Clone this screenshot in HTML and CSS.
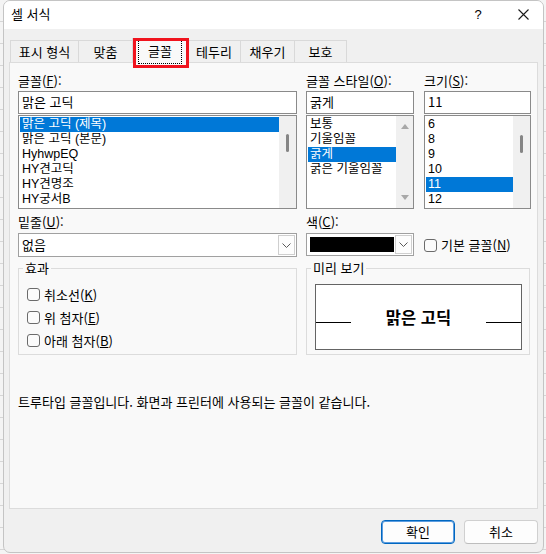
FILE: index.html
```html
<!DOCTYPE html>
<html lang="ko">
<head>
<meta charset="utf-8">
<title>셀 서식</title>
<link rel="stylesheet" href="styles.css">
</head>
<body>
<div class="window">
  <div class="titlebar">
    <span class="title">셀 서식</span>
    <span class="help">?</span>
    <span class="close"><svg width="11" height="11" viewBox="0 0 11 11"><path d="M0.5 0.5 L10.5 10.5 M10.5 0.5 L0.5 10.5" stroke="#1b1b1b" stroke-width="1.1" fill="none"/></svg></span>
  </div>

  <div class="tabs">
    <div class="tab w1">표시 형식</div>
    <div class="tab w2">맞춤</div>
    <div class="tab sel"><span class="focus"></span>글꼴<span class="redbox"></span></div>
    <div class="tab w4">테두리</div>
    <div class="tab w5">채우기</div>
    <div class="tab w6">보호</div>
  </div>

  <div class="panel">
    <div class="row r1">
      <div class="col c1">
        <div class="lbl">글꼴(<u>F</u>):</div>
        <div class="input">맑은 고딕</div>
        <div class="list">
          <div class="items">
            <div class="item on">맑은 고딕 (제목)</div>
            <div class="item">맑은 고딕 (본문)</div>
            <div class="item">HyhwpEQ</div>
            <div class="item">HY견고딕</div>
            <div class="item">HY견명조</div>
            <div class="item">HY궁서B</div>
          </div>
          <div class="sbar"><span class="thumb t-font"></span></div>
        </div>
      </div>
      <div class="col c2">
        <div class="lbl">글꼴 스타일(<u>O</u>):</div>
        <div class="input">굵게</div>
        <div class="list">
          <div class="items">
            <div class="item">보통</div>
            <div class="item">기울임꼴</div>
            <div class="item on">굵게</div>
            <div class="item">굵은 기울임꼴</div>
          </div>
          <div class="sbar arrows"><span class="arr up"></span><span class="arr down"></span></div>
        </div>
      </div>
      <div class="col c3">
        <div class="lbl">크기(<u>S</u>):</div>
        <div class="input">11</div>
        <div class="list">
          <div class="items">
            <div class="item">6</div>
            <div class="item">8</div>
            <div class="item">9</div>
            <div class="item">10</div>
            <div class="item on">11</div>
            <div class="item">12</div>
          </div>
          <div class="sbar"><span class="thumb t-size"></span></div>
        </div>
      </div>
    </div>

    <div class="row r2">
      <div class="col c1">
        <div class="lbl l2">밑줄(<u>U</u>):</div>
        <div class="combo">
          <span class="cval">없음</span>
          <span class="dd"><svg width="9" height="5" viewBox="0 0 9 5"><path d="M0.5 0.5 L4.5 4.5 L8.5 0.5" stroke="#5a5a5a" fill="none"/></svg></span>
        </div>
      </div>
      <div class="col c2">
        <div class="lbl l2">색(<u>C</u>):</div>
        <div class="combo">
          <span class="swatch"></span>
          <span class="dd"><svg width="9" height="5" viewBox="0 0 9 5"><path d="M0.5 0.5 L4.5 4.5 L8.5 0.5" stroke="#5a5a5a" fill="none"/></svg></span>
        </div>
      </div>
      <div class="col c3 chkcol">
        <label class="chk"><span class="box"></span><span>기본 글꼴(<u>N</u>)</span></label>
      </div>
    </div>

    <div class="row r3">
      <div class="group g1">
        <div class="gtitle">효과</div>
        <div class="checks">
          <label class="chk"><span class="box"></span><span>취소선(<u>K</u>)</span></label>
          <label class="chk"><span class="box"></span><span>위 첨자(<u>E</u>)</span></label>
          <label class="chk"><span class="box"></span><span>아래 첨자(<u>B</u>)</span></label>
        </div>
      </div>
      <div class="group g2">
        <div class="gtitle">미리 보기</div>
        <div class="preview">
          <span class="pline"></span>
          <span class="ptext">맑은 고딕</span>
          <span class="pline"></span>
        </div>
      </div>
    </div>

    <p class="desc">트루타입 글꼴입니다. 화면과 프린터에 사용되는 글꼴이 같습니다.</p>
  </div>

  <div class="buttons">
    <button class="btn default">확인</button>
    <button class="btn">취소</button>
  </div>
</div>
</body>
</html>
```

FILE: styles.css
```css
* { box-sizing: border-box; }
html, body { margin: 0; padding: 0; }
body {
  width: 546px;
  height: 554px;
  overflow: hidden;
  background: #f4f4f4 repeating-linear-gradient(to bottom, #f4f4f4 0, #f4f4f4 21px, #d6d6d6 21px, #d6d6d6 22px);
  font-family: "Noto Sans CJK KR", "Noto Sans", sans-serif;
  font-size: 13px;
  color: #000;
}
u { text-decoration: underline; text-underline-offset: 1px; }

.window {
  margin-left: 3px;
  width: 541px;
  height: 553px;
  background: #f0f0f0;
  border: 1px solid #c4c4c4;
  border-radius: 7px;
  overflow: hidden;
}

.titlebar {
  height: 28px;
  background: #ffffff;
  display: flex;
  align-items: center;
  padding-left: 7px;
  padding-bottom: 2px;
}
.title { line-height: 16px; }
.help {
  margin-left: auto;
  width: 30px;
  text-align: center;
  font-family: "Liberation Sans", sans-serif;
  font-size: 13px;
  margin-right: 10px;
}
.close {
  width: 40px;
  display: flex;
  justify-content: center;
}

.tabs {
  display: flex;
  align-items: flex-end;
  height: 24px;
  margin-top: 9px;
  padding-left: 6px;
  position: relative;
  z-index: 2;
}
.tab {
  height: 22px;
  border: 1px solid #d9d9d9;
  border-bottom: none;
  border-right: none;
  background: #f0f0f0;
  display: flex;
  align-items: center;
  justify-content: center;
  line-height: 16px;
  padding-top: 1px;
}
.w1 { width: 68px; }
.w2 { width: 54px; }
.w4 { width: 52px; border-left: none; }
.w5 { width: 54px; }
.w6 { width: 53px; border-right: 1px solid #d9d9d9; }
.tab.sel {
  width: 56px;
  height: 25px;
  margin-bottom: -1px;
  background: #f9f9f9;
  border-right: 1px solid #d9d9d9;
  position: relative;
  padding-top: 0;
}
.focus {
  position: absolute;
  left: 5px;
  right: 5px;
  top: 1px;
  height: 24px;
  border: 1px dotted #000;
}
.redbox {
  position: absolute;
  left: 0;
  top: -1px;
  width: 56px;
  height: 30px;
  border: 3px solid #f0141e;
}

.panel {
  margin-left: 5px;
  width: 529px;
  height: 447px;
  background: #f9f9f9;
  border: 1px solid #dcdcdc;
  padding: 10px 0 0 8px;
  position: relative;
  z-index: 1;
}

.row { display: flex; }
.c1 { width: 279px; margin-right: 9px; }
.c2 { width: 108px; margin-right: 10px; }
.c3 { width: 107px; }

.lbl { height: 18px; line-height: 16px; }
.lbl.l2 { height: 19px; }

.input {
  height: 23px;
  background: #fff;
  border: 1px solid #8a8a8a;
  line-height: 20px;
  padding-left: 3px;
  margin-bottom: 1px;
}

.list {
  height: 94px;
  background: #fff;
  border: 1px solid #8a8a8a;
  display: flex;
  padding: 1px 0 1px 1px;
}
.items { flex: 1; }
.item {
  height: 15px;
  line-height: 15px;
  padding-left: 2px;
  white-space: nowrap;
  font-family: "Liberation Sans", "Noto Sans CJK KR", sans-serif;
  font-size: 12.5px;
}
.item.on { background: #0078d7; color: #fff; }

.sbar {
  width: 17px;
  margin-top: -1px;
  margin-bottom: -1px;
  background: #f0f0f0;
  display: flex;
  flex-direction: column;
  align-items: center;
}
.thumb {
  width: 3px;
  height: 18px;
  border-radius: 2px;
  background: #858585;
}
.t-font { margin-top: 18px; }
.t-size { margin-top: 19px; }
.sbar.arrows { justify-content: space-between; padding: 8px 0 8px; }
.arr {
  width: 0;
  height: 0;
  border-left: 4px solid transparent;
  border-right: 4px solid transparent;
}
.arr.up { border-bottom: 5px solid #a8a8a8; }
.arr.down { border-top: 5px solid #a8a8a8; }

.r2 { margin-top: 5px; }
.combo {
  height: 24px;
  background: #fff;
  border: 1px solid #a0a0a0;
  display: flex;
  align-items: center;
  padding: 1px 1px 1px 3px;
}
.cval { flex: 1; line-height: 20px; }
.dd {
  width: 17px;
  height: 20px;
  margin-left: auto;
  border: 1px solid #cfcfcf;
  background: #fdfdfd;
  display: flex;
  align-items: center;
  justify-content: center;
}
.c2 .combo { height: 23px; }
.c2 .dd { height: 19px; }
.swatch {
  width: 84px;
  height: 15px;
  background: #000;
}
.chkcol {
  display: flex;
  align-items: center;
  padding-top: 19px;
}

.chk {
  display: flex;
  align-items: center;
  line-height: 16px;
  gap: 4px;
}
.box {
  width: 13px;
  height: 13px;
  border: 1px solid #6b6b6b;
  border-radius: 3px;
  background: #fbfbfb;
  flex: none;
}

.r3 { margin-top: 11px; }
.group {
  border: 1px solid #dcdcdc;
  height: 87px;
}
.g1 { width: 279px; margin-right: 9px; padding-left: 8px; }
.g2 { width: 224px; padding-left: 8px; }
.gtitle {
  width: max-content;
  height: 16px;
  margin: -9px 0 0 -4px;
  padding: 0 2px;
  background: #f9f9f9;
  line-height: 16px;
}
.checks { margin-top: 7px; }
.checks .chk { height: 23px; }

.preview {
  margin-top: 8px;
  width: 207px;
  height: 66px;
  background: #fff;
  border: 1px solid #646464;
  display: flex;
  align-items: center;
}
.pline {
  width: 35px;
  height: 1px;
  background: #000;
  margin-top: 11px;
}
.ptext {
  flex: 1;
  text-align: center;
  font-weight: bold;
  font-size: 16.5px;
  line-height: 20px;
}

.desc {
  margin: 39px 0 0 0;
  line-height: 16px;
}

.buttons {
  display: flex;
  justify-content: flex-end;
  gap: 9px;
  margin-top: 11px;
  padding-right: 5px;
}
.btn {
  width: 74px;
  height: 24px;
  background: #fdfdfd;
  border: 1px solid #d0d0d0;
  border-bottom-color: #bdbdbd;
  border-radius: 4px;
  font-family: inherit;
  font-size: 13px;
  color: #000;
  padding: 0;
  line-height: 20px;
}
.btn.default {
  border: 1px solid #0067c0;
  box-shadow: inset 0 0 0 1px #5c9de0;
}
```
